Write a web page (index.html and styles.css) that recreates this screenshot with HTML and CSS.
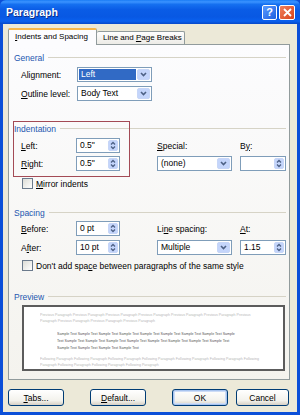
FILE: index.html
```html
<!DOCTYPE html>
<html lang="en">
<head>
  <meta charset="UTF-8" />
  <title>Paragraph</title>
  <link rel="stylesheet" href="styles.css">
</head>
<body>
<div class="window">
  <div class="titlebar">
    <span class="title">Paragraph</span>
    <div class="caption-btns">
      <span class="cap help">?</span>
      <span class="cap close">
        <svg width="9" height="9" viewBox="0 0 9 9"><path d="M1 1 L8 8 M8 1 L1 8" stroke="#fff" stroke-width="1.8" /></svg>
      </span>
    </div>
  </div>

  <div class="dlg">
    <div class="tabs">
      <div class="tab active"><u>I</u>ndents and Spacing</div>
      <div class="tab">Line and <u>P</u>age Breaks</div>
    </div>

    <div class="panel">
      <div class="group-title">General</div>
      <div class="grid general">
        <span class="lbl">Ali<u>g</u>nment:</span>
        <div class="select"><span class="val selected">Left</span><span class="drop"></span></div>
        <span class="lbl"><u>O</u>utline level:</span>
        <div class="select"><span class="val">Body Text</span><span class="drop"></span></div>
      </div>

      <div class="section indent">
        <div class="highlight"></div>
        <div class="group-title">Indentation</div>
        <div class="grid fields">
          <span class="lbl"><u>L</u>eft:</span>
          <div class="spin"><span class="val">0.5"</span><span class="arrows"></span></div>
          <span></span>
          <span class="lbl"><u>S</u>pecial:</span>
          <span></span>
          <span class="lbl">B<u>y</u>:</span>

          <span class="lbl"><u>R</u>ight:</span>
          <div class="spin"><span class="val">0.5"</span><span class="arrows"></span></div>
          <span></span>
          <div class="select"><span class="val">(none)</span><span class="drop"></span></div>
          <span></span>
          <div class="spin"><span class="val"></span><span class="arrows"></span></div>
        </div>
        <div class="check mirror"><span class="box"></span><span><u>M</u>irror indents</span></div>
      </div>

      <div class="section spacing">
        <div class="group-title">Spacing</div>
        <div class="grid fields">
          <span class="lbl"><u>B</u>efore:</span>
          <div class="spin"><span class="val">0 pt</span><span class="arrows"></span></div>
          <span></span>
          <span class="lbl">Li<u>n</u>e spacing:</span>
          <span></span>
          <span class="lbl"><u>A</u>t:</span>

          <span class="lbl">A<u>f</u>ter:</span>
          <div class="spin"><span class="val">10 pt</span><span class="arrows"></span></div>
          <span></span>
          <div class="select"><span class="val">Multiple</span><span class="drop"></span></div>
          <span></span>
          <div class="spin"><span class="val">1.15</span><span class="arrows"></span></div>
        </div>
        <div class="check nospace"><span class="box"></span><span>Don't add spa<u>c</u>e between paragraphs of the same style</span></div>
      </div>

      <div class="section preview-sec">
        <div class="group-title">Preview</div>
        <div class="preview">
          <p class="pv prev">Previous Paragraph Previous Paragraph Previous Paragraph Previous Paragraph Previous Paragraph Previous Paragraph Previous Paragraph Previous Paragraph Previous Paragraph Previous Paragraph</p>
          <p class="pv sample">Sample Text Sample Text Sample Text Sample Text Sample Text Sample Text Sample Text Sample Text Sample Text Sample Text Sample Text Sample Text Sample Text Sample Text Sample Text Sample Text Sample Text Sample Text Sample Text Sample Text Sample Text</p>
          <p class="pv next">Following Paragraph Following Paragraph Following Paragraph Following Paragraph Following Paragraph Following Paragraph Following Paragraph Following Paragraph Following Paragraph Following Paragraph</p>
        </div>
      </div>
    </div>

    <div class="buttons">
      <button class="btn"><u>T</u>abs...</button>
      <button class="btn"><u>D</u>efault...</button>
      <button class="btn ok">OK</button>
      <button class="btn cancel">Cancel</button>
    </div>
  </div>
</div>
</body>
</html>
```

FILE: styles.css
```css
:root {
  --face: #ece9d8;
  --frame: #0b4fd8;
  --heading: #2457b0;
  --rule: #d6d3c6;
  --field-border: #7f9db9;
}
* { box-sizing: border-box; }
body {
  margin: 0;
  width: 300px;
  height: 415px;
  overflow: hidden;
  font-family: "Liberation Sans", Arial, sans-serif;
  font-size: 8.5px;
  color: #000;
  background: #fff;
}
u { text-decoration: underline; text-underline-offset: 1px; }

.window {
  width: 300px;
  height: 415px;
  display: flex;
  flex-direction: column;
  background: var(--frame);
}
.titlebar {
  height: 24px;
  flex: none;
  display: flex;
  align-items: center;
  justify-content: space-between;
  padding: 0 5px 0 6px;
  border-radius: 6px 6px 0 0;
  background: linear-gradient(#1a7cf5 0%, #3b93ff 8%, #1570f0 18%, #0a5ce6 40%, #0858e3 70%, #0a60ee 88%, #0648c8 100%);
}
.title {
  color: #fff;
  font-weight: bold;
  font-size: 10.5px;
  text-shadow: 1px 1px 0 #0a2f8a;
}
.caption-btns { display: flex; gap: 2px; }
.cap {
  width: 15px;
  height: 15px;
  border: 1px solid #fff;
  border-radius: 2px;
  display: flex;
  align-items: center;
  justify-content: center;
  color: #fff;
  font-weight: bold;
  font-size: 11px;
}
.help { background: linear-gradient(135deg, #5b9bff, #1e5fe0); }
.close { background: linear-gradient(135deg, #f0805c, #d8421a); width: 16px; }

.dlg {
  flex: 1;
  margin: 0 3px 3px;
  background: var(--face);
  display: flex;
  flex-direction: column;
  padding: 4px 7px 0 5px;
}

.tabs {
  display: flex;
  align-items: flex-end;
  height: 16px;
  position: relative;
  z-index: 1;
}
.tab {
  height: 13px;
  padding: 0 6px;
  border: 1px solid #919b9c;
  border-bottom: none;
  border-radius: 2px 2px 0 0;
  background: linear-gradient(#fefefe, #ecebe6);
  font-size: 8px;
  line-height: 12px;
  white-space: nowrap;
}
.tab.active {
  height: 17px;
  width: 89px;
  margin-bottom: -1px;
  padding: 0 6px;
  border-top: 2px solid #f7b74a;
  background: #fcfcfe;
  line-height: 14px;
}
.tab:not(.active) { width: 88px; border-left: none; }

.panel {
  border: 1px solid #919b9c;
  background: linear-gradient(#fcfcfe, #f4f3ee);
  height: 336px;
  padding: 7px 3px 0 4px;
  position: relative;
}
.group-title {
  display: flex;
  align-items: center;
  height: 11px;
  padding-left: 1px;
  color: var(--heading);
}
.group-title::after {
  content: "";
  flex: 1;
  margin-left: 4px;
  border-top: 1px solid var(--rule);
}

.grid {
  display: grid;
  margin-left: 8px;
  align-items: center;
}
.general {
  grid-template-columns: 56px 75px;
  grid-auto-rows: 15px;
  row-gap: 4px;
  margin-top: 4px;
}
.fields {
  grid-template-columns: 55px 44px 37px 75px 8px 46px;
  grid-auto-rows: 15px;
  margin-top: 4px;
  row-gap: 3px;
}
.spacing .fields { margin-top: 3px; row-gap: 4px; }

.select, .spin {
  height: 15px;
  border: 1px solid var(--field-border);
  background: #fff;
  display: flex;
  align-items: center;
  padding: 1px;
}
.val {
  flex: 1;
  height: 100%;
  padding-left: 2px;
  line-height: 11px;
}
.val.selected {
  background: #316ac5;
  color: #fff;
  margin-right: 1px;
}
.drop, .arrows {
  flex: none;
  width: 13px;
  height: 11px;
  border-radius: 2px;
  border: 1px solid #c7d6f7;
  background-color: #c4d5fb;
  background-repeat: no-repeat;
  background-position: center;
}
.drop {
  background-image: url("data:image/svg+xml,%3Csvg xmlns='http://www.w3.org/2000/svg' width='7' height='5'%3E%3Cpath d='M1 1 L3.5 3.5 L6 1' fill='none' stroke='%234d6185' stroke-width='1.6'/%3E%3C/svg%3E");
}
.arrows {
  width: 10px;
  background-image: url("data:image/svg+xml,%3Csvg xmlns='http://www.w3.org/2000/svg' width='6' height='9'%3E%3Cpath d='M1 3.5 L3 1.5 L5 3.5 M1 5.5 L3 7.5 L5 5.5' fill='none' stroke='%234d6185' stroke-width='1.3'/%3E%3C/svg%3E");
}

.section { position: relative; }
.indent { margin-top: 22px; }
.highlight {
  position: absolute;
  left: 0;
  top: -2px;
  width: 117px;
  height: 56px;
  border: 1px solid #a34a55;
}
.check {
  display: flex;
  align-items: center;
  gap: 3px;
  margin-left: 9px;
  height: 11px;
}
.check .box {
  width: 11px;
  height: 11px;
  border: 1px solid #6b7a8c;
  background: linear-gradient(135deg, #dcdcd6, #fff);
}
.mirror { margin-top: 7px; }
.spacing { margin-top: 18px; }
.nospace { margin-top: 5px; }
.preview-sec { margin-top: 20px; }

.preview {
  margin: 3px 0 0 9px;
  width: 263px;
  height: 66px;
  border: 2px solid #5c5c5c;
  background: #fff;
  padding: 5px 16px 0 16px;
  overflow: hidden;
}
.pv {
  margin: 0;
  font-size: 3.6px;
  line-height: 6px;
  height: 12px;
  overflow: hidden;
  color: #b8b8b8;
}
.pv.sample {
  color: #555;
  line-height: 7px;
  height: 21px;
  margin: 7px 28px 4px 17px;
}

.buttons {
  display: flex;
  margin-top: 9px;
  gap: 0;
}
.btn {
  height: 17px;
  width: 56px;
  padding: 0;
  border: 1px solid #003c74;
  border-radius: 3px;
  background: linear-gradient(#ffffff, #f3f2ec 70%, #d6d0c5);
  font-family: inherit;
  font-size: 8.5px;
  color: #000;
}
.btn + .btn { margin-left: 26px; }
.btn.ok {
  box-shadow: inset 0 0 0 1px #a8c4ef, inset 0 0 0 2px #cddcf6;
}
.btn.cancel { margin-left: 8px; width: 53px; }
```
